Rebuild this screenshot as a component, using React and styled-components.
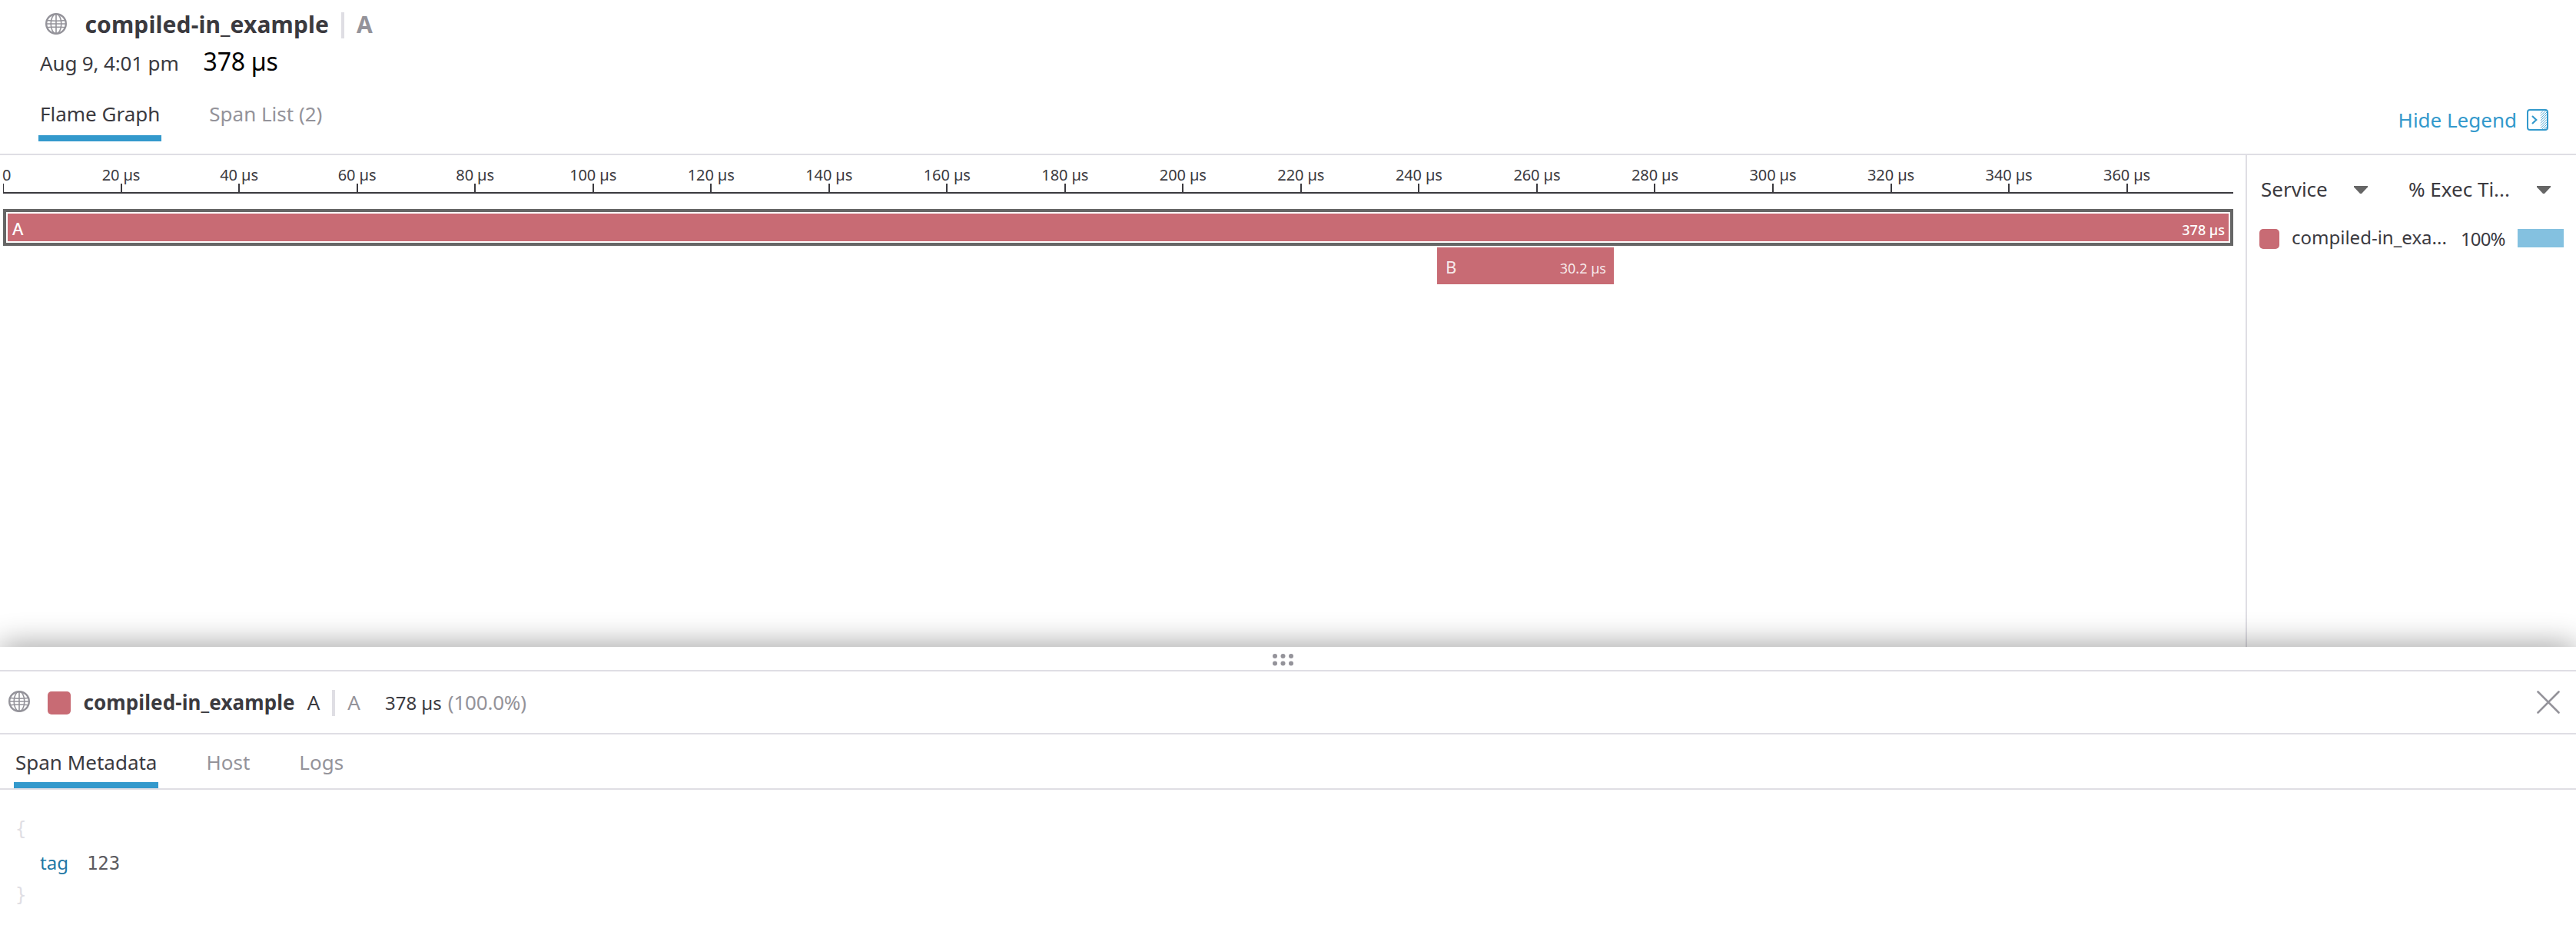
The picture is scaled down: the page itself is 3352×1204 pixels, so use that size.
import React from "react";
import styled, { createGlobalStyle } from "styled-components";

const c = {
  text: "#3b3a3f",
  muted: "#94939a",
  line: "#dfdee4",
  blue: "#3399cc",
  red: "#c86b74",
};

const Global = createGlobalStyle`
  *, *::before, *::after { box-sizing: border-box; }
  body { margin: 0; background: #fff; color: ${c.text}; font-family: "Noto Sans", "Open Sans", sans-serif; font-size: 26px; line-height: 36px; }
  #root { height: 1204px; overflow: hidden; }
`;

const Page = styled.div`
  display: flex;
  flex-direction: column;
  width: 3352px;
  height: 1204px;
`;

const Header = styled.header`
  display: flex;
  justify-content: space-between;
  align-items: flex-end;
  height: 202px;
  padding: 0 36px 0 50px;
  border-bottom: 2px solid ${c.line};
  flex: none;
`;

const HeaderMain = styled.div`
  display: flex;
  flex-direction: column;
  height: 200px;
`;

const TitleRow = styled.div`
  display: flex;
  align-items: center;
  height: 62px;
  padding-left: 9px;
`;

const Title = styled.h1`
  margin: 2px 0 0 23.5px;
  font-size: 30px;
  line-height: 40px;
  font-weight: 700;
  letter-spacing: 0.12px;
`;

const Divider = styled.span`
  width: 4px;
  height: 34px;
  background: ${c.line};
  margin: ${(p) => p.$margin};
`;

const Operation = styled.span`
  margin-top: ${(p) => (p.$strong ? "2px" : "0")};
  font-size: ${(p) => (p.$strong ? "30px" : "26px")};
  font-weight: ${(p) => (p.$strong ? 700 : 400)};
  color: ${c.muted};
`;

const MetaRow = styled.div`
  display: flex;
  align-items: baseline;
  height: 44px;
  margin-top: -4px;
  padding-left: 2px;
  gap: 32px;
  letter-spacing: -0.15px;
`;

const Total = styled.span`
  font-size: 32px;
  line-height: 44px;
  letter-spacing: -0.25px;
  color: #000;
`;

const Tabs = styled.nav`
  display: flex;
  gap: 60px;
  height: ${(p) => p.$height};
  padding: ${(p) => p.$padding};
`;

const Tab = styled.a`
  padding: ${(p) => p.$pad} 2px 0;
  color: ${(p) => (p.$active ? c.text : c.muted)};
  border-bottom: 8px solid ${(p) => (p.$active ? c.blue : "transparent")};
`;

const LegendToggle = styled.a`
  display: flex;
  align-items: center;
  gap: 13px;
  height: 36px;
  margin-bottom: 26px;
  color: ${c.blue};
`;

const Main = styled.main`
  display: flex;
  height: 640px;
  flex: none;
`;

const Graph = styled.section`
  flex: 1;
  padding: 0 16px 0 4px;
`;

const Axis = styled.div`
  display: grid;
  grid-template-columns: repeat(18, ${(2902 * 20) / 378}px) 1fr;
  height: 50px;
  border-bottom: 2px solid ${c.text};
  font-size: 20px;
  line-height: 23px;
  letter-spacing: -0.1px;
`;

const TickCell = styled.div`
  display: flex;
  flex-direction: column;
  justify-content: flex-end;
  align-items: ${(p) => (p.$first ? "flex-start" : "center")};
  white-space: nowrap;
  width: ${(p) => (p.$first ? "auto" : "120px")};
  margin-left: ${(p) => (p.$first ? "0" : "-60px")};
  &::after {
    content: "";
    width: ${(p) => (p.$first ? "1px" : "2px")};
    height: 11px;
    background: ${c.text};
  }
`;

const TickLabel = styled.span`
  margin-left: ${(p) => (p.$first ? "-1px" : "0")};
`;

const Span = styled.div`
  display: flex;
  justify-content: space-between;
  align-items: baseline;
  height: 48px;
  width: ${(p) => p.$width};
  margin: ${(p) => p.$margin};
  padding: ${(p) => (p.$selected ? "3px 7px 0 8px" : "7px 10px 0 11px")};
  background: ${c.red};
  color: ${(p) => (p.$selected ? "#fff" : "rgba(255,255,255,.87)")};
  font-size: 22px;
  font-weight: ${(p) => (p.$selected ? 500 : 400)};
  ${(p) => p.$selected && "border: 4px solid #666; box-shadow: inset 0 0 0 2px #fff;"}
`;

const Duration = styled.span`
  font-size: 18px;
`;

const Legend = styled.aside`
  width: 430px;
  border-left: 2px solid ${c.line};
  padding: 24px 16px 0;
`;

const LegendHead = styled.div`
  display: flex;
  align-items: center;
  height: 40px;
`;

const HeadLabel = styled.span`
  width: ${(p) => p.$width};
  margin-left: ${(p) => p.$left || "2px"};
  white-space: nowrap;
`;

const LegendRow = styled.div`
  display: flex;
  align-items: center;
  height: 40px;
  margin-top: 25px;
`;

const Swatch = styled.span`
  flex: none;
  width: ${(p) => p.$size};
  height: ${(p) => p.$size};
  margin: ${(p) => p.$margin || 0};
  border-radius: 5px;
  background: ${c.red};
`;

const ServiceName = styled.span`
  width: 202px;
  margin: -4px 0 0 16px;
  font-size: 24px;
  white-space: nowrap;
`;

const Percent = styled.span`
  font-size: 24px;
  letter-spacing: -0.9px;
  margin-left: 18px;
  width: 57px;
`;

const ExecBar = styled.span`
  width: 60px;
  height: 24px;
  margin: -2px 0 0 17px;
  background: #84c1e0;
`;

const Splitter = styled.div`
  display: flex;
  justify-content: center;
  align-items: center;
  height: 32px;
  padding: 4px 12px 0 0;
  flex: none;
  background: #fff;
  border-bottom: 2px solid ${c.line};
  box-shadow: 0 0 40px rgba(0, 0, 0, 0.45);
  clip-path: inset(-80px 0 0 0);
`;

const DetailHeader = styled.div`
  display: flex;
  align-items: center;
  height: 82px;
  padding: 0 21px 0 11px;
  border-bottom: 2px solid ${c.line};
  flex: none;
`;

const DetailTitle = styled.span`
  font-weight: 700;
  letter-spacing: 0.1px;
  margin: 0 16px 0 16.5px;
`;

const DetailTime = styled.span`
  display: flex;
  align-items: baseline;
  gap: 8px;
  margin-left: 32px;
  font-size: 24px;
  flex: 1;
`;

const Share = styled.span`
  font-size: 26px;
  letter-spacing: -0.2px;
  color: ${c.muted};
`;

const DetailTabs = styled.div`
  border-bottom: 2px solid ${c.line};
  flex: none;
`;

const Json = styled.div`
  padding: 30px 0 0 20px;
  font-size: 24px;
  line-height: 43px;
`;

const Brace = styled.div`
  height: 43px;
  font-family: "DejaVu Sans Mono", monospace;
  color: ${c.line};
`;

const Entry = styled.div`
  display: flex;
  align-items: baseline;
  height: 43px;
  gap: 24px;
  padding-left: 32px;
`;

const Key = styled.span`
  color: #1f78a5;
`;

const Value = styled.span`
  font-family: "DejaVu Sans Mono", monospace;
  color: #5c5b60;
`;

const GlobeSvg = styled.svg`
  flex: none;
  margin-top: ${(p) => p.$top || 0};
`;

const Globe = ({ top }) => (
  <GlobeSvg $top={top} width="28" height="28" viewBox="0 0 28 28" fill="none" stroke={c.muted} strokeWidth="1.6">
    <circle cx="14" cy="14" r="12.8" strokeWidth="2.4" />
    <ellipse cx="14" cy="14" rx="6.8" ry="12.8" />
    <path d="M14 1v26M2 9.5q12 1.6 24 0M1 14h26M2 18.8q12-1.6 24 0" />
  </GlobeSvg>
);

const HideIcon = () => (
  <svg width="28" height="28" viewBox="0 0 28 28" fill="none" stroke={c.blue}>
    <rect x="1" y="1" width="26" height="26" rx="3" strokeWidth="2" />
    <path d="M7 9l5.300 5L7 19" strokeWidth="2.2" />
    <path
      d="M18 5.500l3-3M18 8.700l6.500-6.500M18 11.900l8-8M18 15.100l8-8M18 18.300l8-8M18 21.500l8-8M18 24.700l8-8M19.500 26.400l6.500-6.500M22.700 26.400l3.300-3.300"
      strokeWidth="0.9"
    />
  </svg>
);

const CaretSvg = styled.svg`
  margin-top: 2px;
`;

const Caret = () => (
  <CaretSvg width="18" height="10" viewBox="0 0 18 10">
    <path d="M0 0h18v1.500L10 10H8L0 1.500z" fill="#666" />
  </CaretSvg>
);

const Grip = () => (
  <svg width="28" height="16" viewBox="0 0 28 16" fill={c.muted}>
    {[3, 13.5, 24].map((x) => [3, 12.5].map((y) => <circle key={x + "-" + y} cx={x} cy={y} r="3" />))}
  </svg>
);

const Close = () => (
  <svg width="30" height="30" viewBox="0 0 30 30" stroke={c.muted} strokeWidth="2.6" strokeLinecap="round">
    <path d="M1.500 1.500l27 27M28.500 1.500l-27 27" />
  </svg>
);

const ticks = Array.from({ length: 19 }, (_, i) => i * 20);

export default function App() {
  return (
    <Page>
      <Global />
      <Header>
        <HeaderMain>
          <TitleRow>
            <Globe />
            <Title>compiled-in_example</Title>
            <Divider $margin="4px 16px 0" />
            <Operation $strong>A</Operation>
          </TitleRow>
          <MetaRow>
            <span>Aug 9, 4:01 pm</span>
            <Total>378 µs</Total>
          </MetaRow>
          <Tabs $height="82px" $padding="0">
            <Tab $active $pad="28px">Flame Graph</Tab>
            <Tab $pad="28px">Span List (2)</Tab>
          </Tabs>
        </HeaderMain>
        <LegendToggle>
          <span>Hide Legend</span>
          <HideIcon />
        </LegendToggle>
      </Header>
      <Main>
        <Graph>
          <Axis>
            {ticks.map((t) => (
              <TickCell key={t} $first={t === 0}>
                <TickLabel $first={t === 0}>{t === 0 ? "0" : `${t} µs`}</TickLabel>
              </TickCell>
            ))}
          </Axis>
          <Span $selected $width="2902px" $margin="20px 0 2px">
            <span>A</span>
            <Duration>378 µs</Duration>
          </Span>
          <Span $width="230px" $margin="0 0 0 1866px">
            <span>B</span>
            <Duration>30.2 µs</Duration>
          </Span>
        </Graph>
        <Legend>
          <LegendHead>
            <HeadLabel $width="121px">Service</HeadLabel>
            <Caret />
            <HeadLabel $width="167px" $left="53px">% Exec Ti...</HeadLabel>
            <Caret />
          </LegendHead>
          <LegendRow>
            <Swatch $size="26px" />
            <ServiceName>compiled-in_exa...</ServiceName>
            <Percent>100%</Percent>
            <ExecBar />
          </LegendRow>
        </Legend>
      </Main>
      <Splitter>
        <Grip />
      </Splitter>
      <DetailHeader>
        <Globe top="-2px" />
        <Swatch $size="30px" $margin="2px 0 0 23px" />
        <DetailTitle>compiled-in_example</DetailTitle>
        <span>A</span>
        <Divider $margin="2px 16px 0" />
        <Operation>A</Operation>
        <DetailTime>
          <span>378 µs</span>
          <Share>(100.0%)</Share>
        </DetailTime>
        <Close />
      </DetailHeader>
      <DetailTabs>
        <Tabs $height="70px" $padding="0 0 0 18px">
          <Tab $active $pad="18px">Span Metadata</Tab>
          <Tab $pad="18px">Host</Tab>
          <Tab $pad="18px">Logs</Tab>
        </Tabs>
      </DetailTabs>
      <Json>
        <Brace>{"{"}</Brace>
        <Entry>
          <Key>tag</Key>
          <Value>123</Value>
        </Entry>
        <Brace>{"}"}</Brace>
      </Json>
    </Page>
  );
}
